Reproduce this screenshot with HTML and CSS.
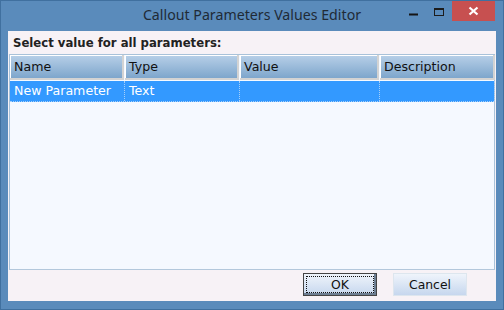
FILE: index.html
```html
<!DOCTYPE html>
<html lang="en">

<head>
  <meta charset="UTF-8">
  <title>Callout Parameters Values Editor</title>
  <link rel="stylesheet" href="styles.css">
</head>

<body>
  <div class="window">
    <div class="titlebar">
      <div class="spacer"></div>
      <div class="title">Callout Parameters Values Editor</div>
      <div class="controls">
        <div class="ctl minimize">
          <svg width="26" height="20" viewBox="0 0 26 20"><path d="M9 13 H18 M9 14 H18" stroke="#151515" stroke-width="1.2" fill="none"/></svg>
        </div>
        <div class="ctl maximize"><div class="box"></div></div>
        <div class="ctl close">
          <svg width="43" height="20" viewBox="0 0 43 20"><path d="M17.5 6.5 L25.5 13.5 M25.5 6.5 L17.5 13.5" stroke="#ffffff" stroke-width="2.2"/></svg>
        </div>
      </div>
    </div>

    <div class="client">
      <div class="caption">Select value for all parameters:</div>

      <div class="grid">
        <div class="row head">
          <div class="cell">Name</div>
          <div class="cell">Type</div>
          <div class="cell">Value</div>
          <div class="cell">Description</div>
        </div>
        <div class="row selected">
          <div class="cell">New Parameter</div>
          <div class="cell">Text</div>
          <div class="cell"></div>
          <div class="cell"></div>
        </div>
      </div>

      <div class="footer">
        <button class="btn default"><span>OK</span></button>
        <button class="btn">Cancel</button>
      </div>
    </div>
  </div>
</body>

</html>
```

FILE: styles.css
```css
* {
  box-sizing: border-box;
}

body {
  margin: 0;
  width: 504px;
  height: 310px;
  overflow: hidden;
  font-family: "DejaVu Sans", Verdana, sans-serif;
}

.window {
  width: 504px;
  height: 310px;
  background-color: #5a8bbb;
  border: 1px solid #40709f;
  display: flex;
  flex-direction: column;
}

/* title bar */
.titlebar {
  height: 30px;
  display: flex;
  align-items: flex-start;
}

.spacer {
  width: 103px;
  flex-shrink: 0;
}

.title {
  flex: 1;
  text-align: center;
  font-family: "Noto Sans", "Open Sans", sans-serif;
  font-size: 14.2px;
  color: #1f2a36;
  padding-top: 4px;
}

.controls {
  display: flex;
  flex-shrink: 0;
  padding-right: 8px;
}

.ctl {
  height: 20px;
  width: 26px;
  flex-shrink: 0;
}

.maximize .box {
  width: 10px;
  height: 8px;
  margin: 7px 0 0 8px;
  border: 1px solid #1c1c1c;
  border-top-width: 2px;
}

.ctl svg {
  display: block;
}

.close {
  width: 43px;
  background-color: #c75050;
}

/* client area */
.client {
  flex: 1;
  margin: 0 7px 8px 7px;
  background-color: #f7f2f6;
  display: flex;
  flex-direction: column;
}

.caption {
  height: 23px;
  padding: 5px 0 0 5px;
  font-weight: bold;
  font-size: 11.7px;
  color: #222222;
}

.grid {
  flex: 1;
  margin: 0 1px 0 1px;
  border: 1px solid #a9c2d9;
  border-bottom: 1px solid #b3c8dc;
  background-color: #f5f9ff;
}

.row {
  display: grid;
  grid-template-columns: 115px 115px 140px 115px;
}

.head {
  height: 25px;
}

.head .cell {
  background: linear-gradient(#b8d0e8, #7ea6cc);
  border-right: 2px solid #d3d3d3;
  border-bottom: 2px solid #d3d3d3;
  box-shadow: inset 1px 1px #ffffff;
  margin-right: 1px;
  font-size: 12.6px;
  color: #111111;
  padding: 4px 0 0 4px;
}

.head .cell:last-child {
  margin-right: 0;
}

.selected {
  height: 21px;
  margin-top: 1px;
  background-color: #3399ff;
  border-bottom: 1px dotted #a8d0f8;
}

.selected .cell {
  color: #ffffff;
  font-size: 12.6px;
  padding: 2px 0 0 4px;
  border-right: 1px dotted #a8d0f8;
}

/* footer buttons */
.footer {
  height: 31px;
  display: flex;
  justify-content: flex-end;
  align-items: flex-start;
  gap: 16px;
  padding: 3px 29px 0 0;
}

.btn {
  width: 74px;
  height: 23px;
  border: 1px solid #dde6ee;
  background: linear-gradient(#eff4fb, #c6d7ee);
  font-family: "DejaVu Sans", Verdana, sans-serif;
  font-size: 12.4px;
  color: #111111;
  padding: 0;
}

.default {
  border: 1px solid #444444;
  box-shadow: inset -2px -2px #6d7f93;
  padding: 2px;
}

.default span {
  display: block;
  height: 100%;
  border: 1px dotted #111111;
  line-height: 15px;
}
```
